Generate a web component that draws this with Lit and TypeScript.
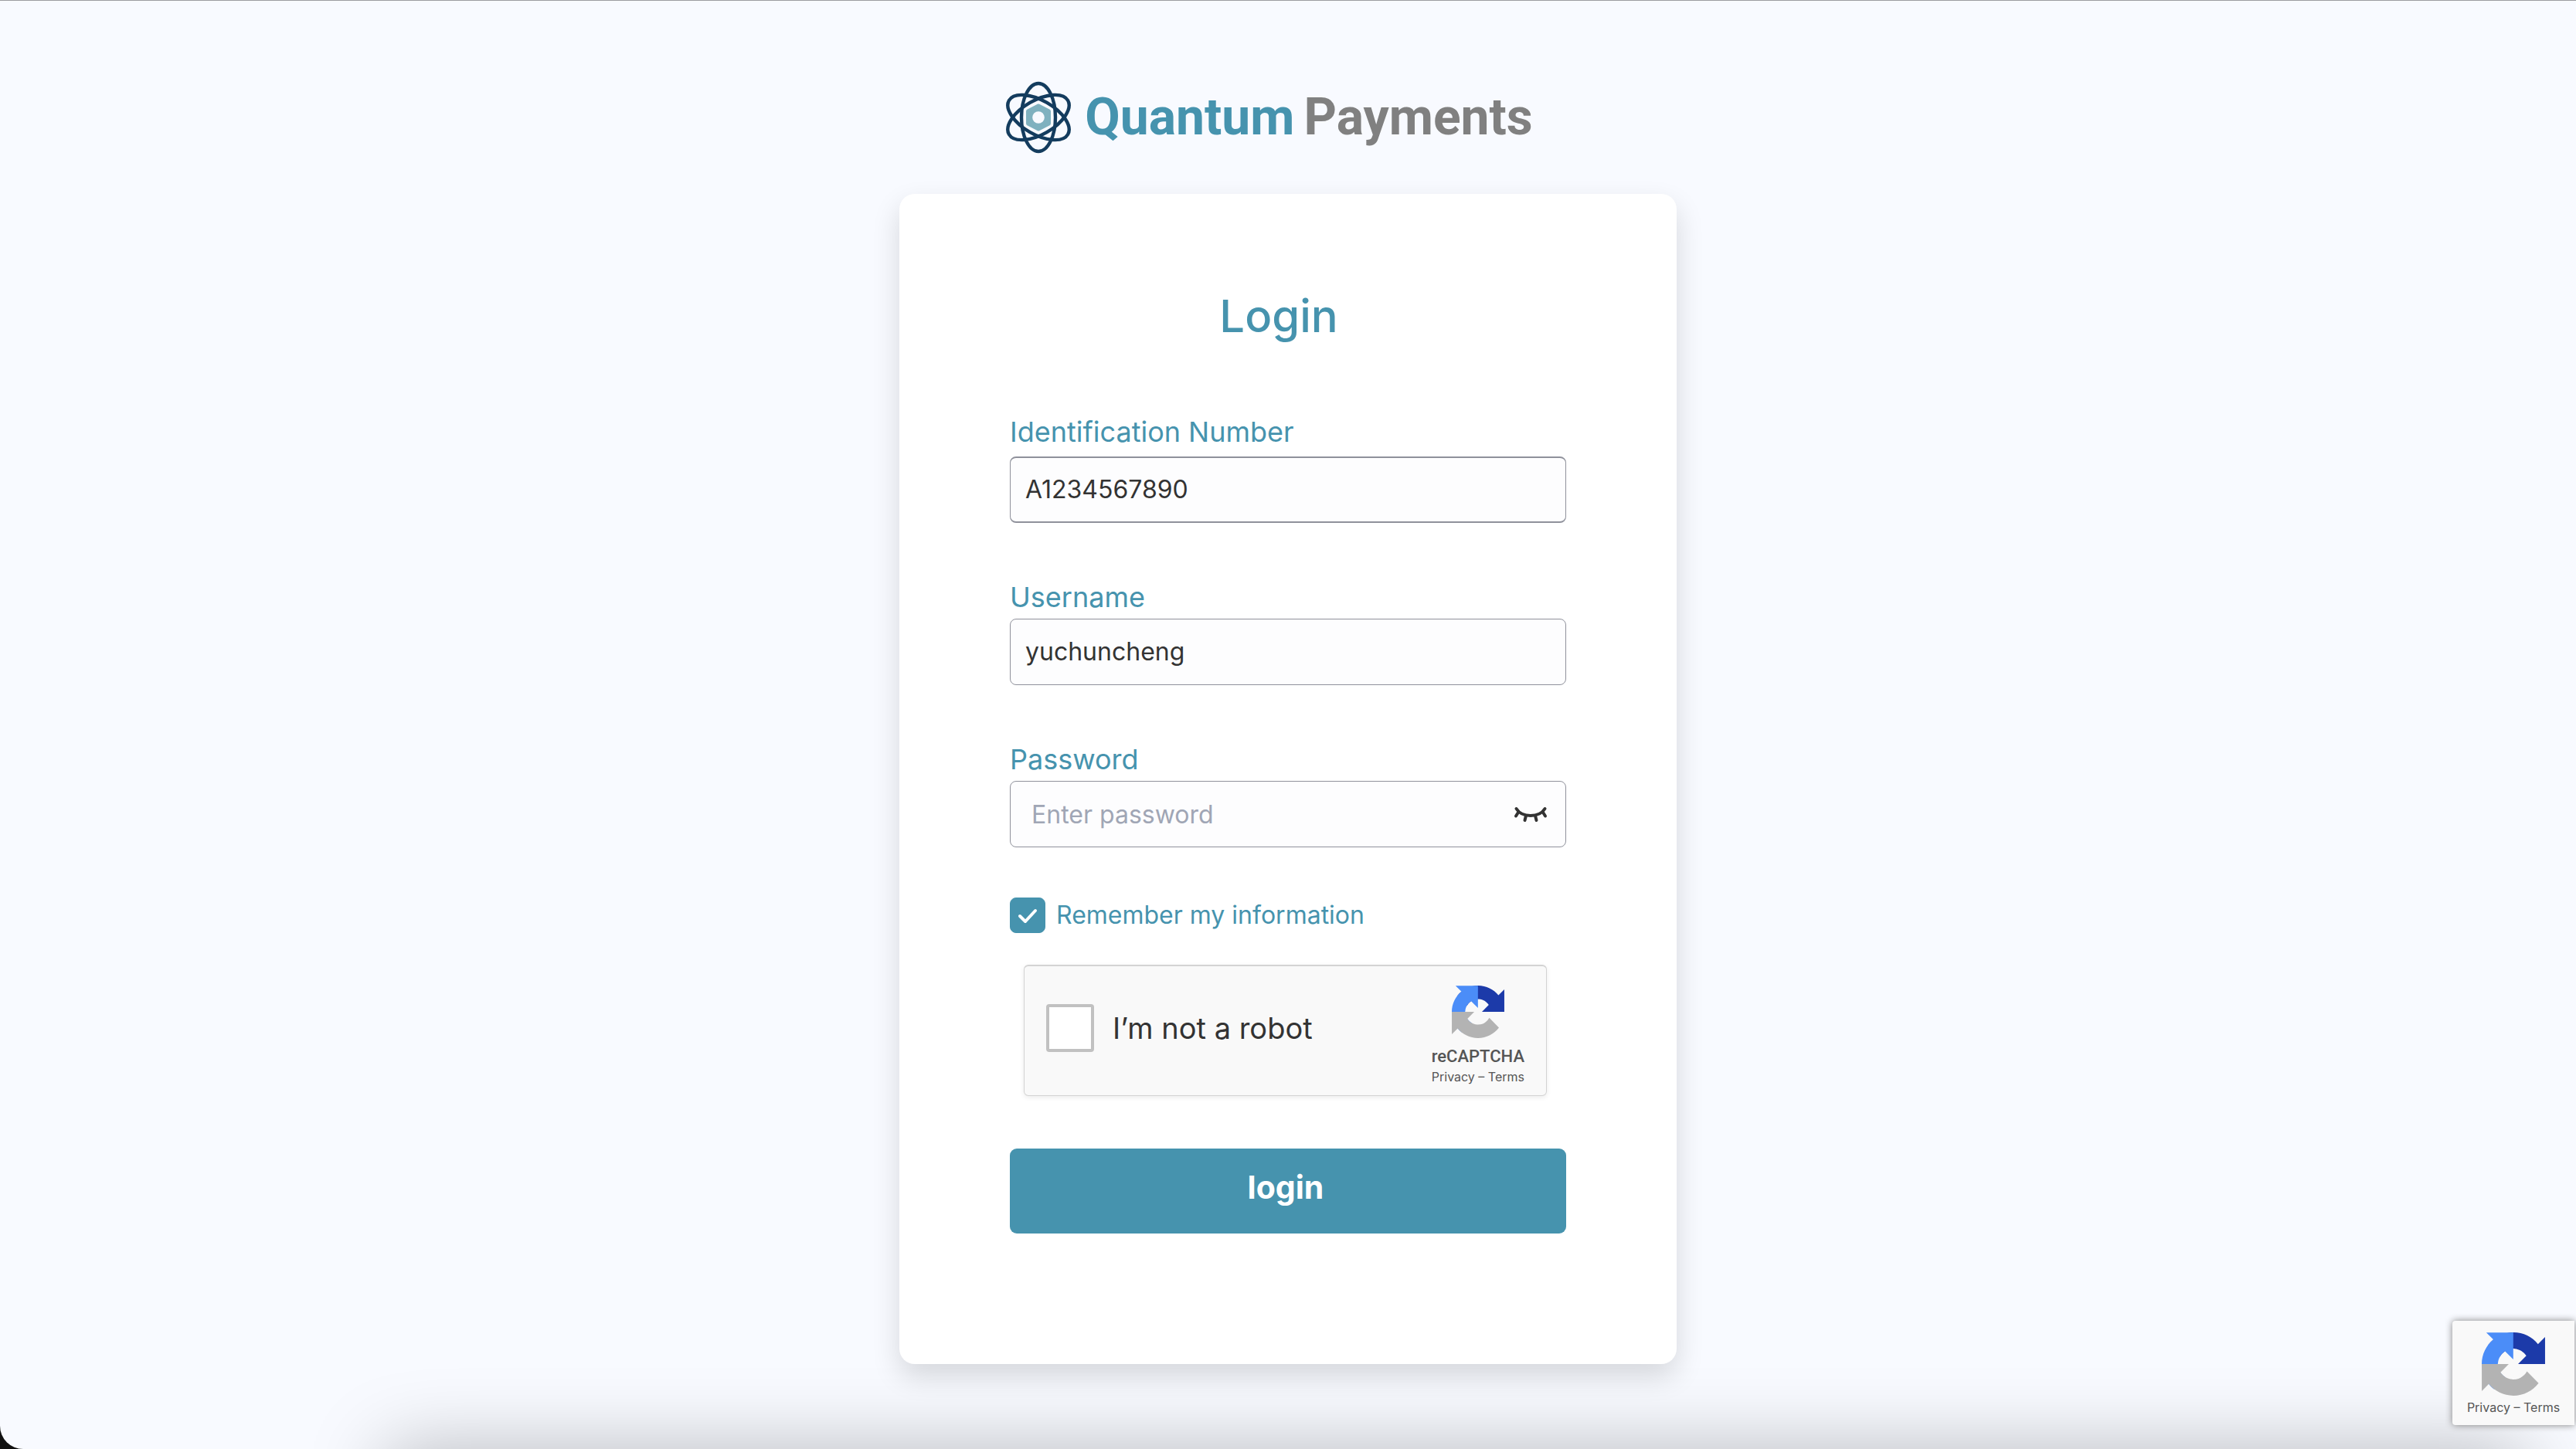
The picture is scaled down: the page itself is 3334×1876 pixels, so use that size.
import { LitElement, html, css, svg } from "lit";
import { customElement, state } from "lit/decorators.js";

const TEAL = css`#4693ae`;

@customElement("recaptcha-mark")
class RecaptchaMark extends LitElement {
  static styles = css`
    :host {
      display: block;
    }
    .mark {
      display: block;
      width: 100%;
    }
  `;

  render() {
    return html`
      <svg class="mark" viewBox="0 0 64 64" aria-hidden="true">
        ${svg`
          <path fill="#1c3aa9" d="M64 31.955l-.033-1.37V4.687l-7.16 7.16C50.948 4.674 42.033.093 32.05.093c-10.4 0-19.622 4.96-25.458 12.64l11.736 11.86a15.55 15.55 0 0 1 4.754-5.334c2.05-1.6 4.952-2.906 8.968-2.906.485 0 .86.057 1.135.163 4.976.393 9.288 3.14 11.828 7.124l-8.307 8.307L64 31.953"/>
          <path fill="#4b8df8" d="M31.862.094l-1.37.033H4.594l7.16 7.16C4.58 13.147 0 22.06 0 32.046c0 10.4 4.96 19.622 12.64 25.458L24.5 45.768a15.55 15.55 0 0 1-5.334-4.754c-1.6-2.05-2.906-4.952-2.906-8.968 0-.485.057-.86.163-1.135.393-4.976 3.14-9.288 7.124-11.828l8.307 8.307L31.86.095"/>
          <path fill="#b3b3b3" d="M.001 32.045l.033 1.37v25.898l7.16-7.16c5.86 7.173 14.774 11.754 24.76 11.754 10.4 0 19.622-4.96 25.458-12.64l-11.736-11.86a15.55 15.55 0 0 1-4.754 5.334c-2.05 1.6-4.952 2.906-8.968 2.906-.485 0-.86-.057-1.135-.163-4.976-.393-9.288-3.14-11.828-7.124l8.307-8.307c-10.522.04-22.4.066-27.295-.005"/>
        `}
      </svg>
    `;
  }
}

@customElement("app-root")
class AppRoot extends LitElement {
  @state() private showPassword = false;

  static styles = css`
    :host {
      display: block;
      background: #111;
      color: #333;
      font-family: Inter, "Liberation Sans", sans-serif;
    }
    * {
      box-sizing: border-box;
    }
    .page {
      position: relative;
      display: flex;
      flex-direction: column;
      align-items: center;
      min-height: 100vh;
      padding: 103px 0 60px;
      overflow: hidden;
      background: #f8faff;
      border-top: 1px solid #9c9ca0;
      border-bottom-left-radius: 30px;
    }
    .dock-shade {
      position: absolute;
      top: 100%;
      left: 15%;
      right: 2%;
      height: 120px;
      box-shadow: 0 0 100px rgba(0, 0, 0, 0.26);
      pointer-events: none;
    }
    .brand {
      display: flex;
      align-items: center;
      gap: 16px;
      height: 96px;
      margin-bottom: 51px;
      padding-right: 50px;
    }
    .brand-icon {
      width: 88px;
      height: 96px;
    }
    .brand-name {
      display: flex;
      gap: 12px;
      font: 700 66px/80px Roboto, sans-serif;
      color: #808080;
    }
    .brand-lead {
      color: ${TEAL};
    }
    .card {
      width: 100%;
      max-width: 1006px;
      padding: 122px 143px 169px;
      background: #fff;
      border-radius: 20px;
      box-shadow: 0 16px 36px rgba(0, 0, 0, 0.14);
    }
    .title {
      margin: 0 0 90px;
      padding-right: 24px;
      font-size: 58px;
      line-height: 72px;
      font-weight: 500;
      text-align: center;
      color: ${TEAL};
    }
    .field {
      display: flex;
      flex-direction: column;
      gap: 4px;
      margin-bottom: 72px;
    }
    .field.strong {
      gap: 8px;
    }
    .label {
      font-size: 36px;
      line-height: 48px;
      color: ${TEAL};
    }
    .box {
      display: flex;
      align-items: center;
      height: 86px;
      padding: 0 19px;
      background: #fdfdfe;
      border: 1px solid #8f919b;
      border-radius: 8px;
    }
    .strong .box {
      border-width: 2px 1px;
    }
    .box.secret {
      padding: 2px 22px 0 27px;
    }
    .input {
      flex: 1;
      min-width: 0;
      padding: 0;
      border: 0;
      outline: 0;
      background: none;
      font: 400 32px/48px Inter, "Liberation Sans", sans-serif;
      color: #333;
    }
    .input::placeholder {
      color: #a0a6b5;
      opacity: 1;
    }
    .reveal {
      padding: 0;
      border: 0;
      background: none;
      cursor: pointer;
    }
    .eye {
      display: block;
      width: 46px;
      height: 24px;
    }
    .remember {
      display: flex;
      align-items: center;
      gap: 14px;
      margin-top: -7px;
      font-size: 32px;
      line-height: 46px;
      color: ${TEAL};
    }
    .tick {
      display: grid;
      width: 46px;
      height: 46px;
    }
    .tick > * {
      grid-area: 1 / 1;
    }
    .tick-input {
      appearance: none;
      width: 46px;
      height: 46px;
      margin: 0;
      border: 1px solid ${TEAL};
      border-radius: 8px;
      background: #fff;
    }
    .tick-input:checked {
      background: ${TEAL};
    }
    .tick-mark {
      width: 46px;
      height: 46px;
      pointer-events: none;
    }
    .captcha {
      display: flex;
      align-items: center;
      height: 170px;
      margin: 41px 25px 68px 18px;
      padding: 0 28px;
      background: #f9f9f9;
      border: 1px solid #d3d3d3;
      border-top-width: 2px;
      border-radius: 6px;
      box-shadow: 0 2px 6px rgba(0, 0, 0, 0.08);
    }
    .robot {
      flex: 1;
      display: flex;
      align-items: center;
      gap: 24px;
      margin-top: -8px;
      font-size: 38px;
      line-height: 60px;
    }
    .robot-input {
      appearance: none;
      width: 62px;
      height: 62px;
      margin: 0;
      background: #fff;
      border: 4px solid #c1c1c1;
      border-radius: 4px;
    }
    .captcha-side {
      display: flex;
      flex-direction: column;
      align-items: center;
      padding-top: 12px;
    }
    .captcha-mark {
      width: 68px;
      margin-bottom: 10px;
    }
    .captcha-name {
      font: 500 22px/28px Roboto, sans-serif;
      color: #555;
    }
    .legal {
      font-size: 16px;
      line-height: 24px;
      white-space: nowrap;
      color: #555;
    }
    .legal a {
      color: inherit;
      text-decoration: none;
    }
    .submit {
      display: block;
      width: 100%;
      height: 110px;
      padding: 0 6px 10px 0;
      border: 0;
      border-radius: 9px;
      background: ${TEAL};
      color: #fff;
      font: 700 41px/48px Inter, "Liberation Sans", sans-serif;
      cursor: pointer;
    }
    .badge {
      position: absolute;
      right: 2px;
      bottom: 31px;
      display: flex;
      flex-direction: column;
      align-items: center;
      gap: 3px;
      width: 158px;
      height: 135px;
      padding-top: 15px;
      background: #f9f9f9;
      border-radius: 4px 0 0 4px;
      box-shadow: 0 0 10px #808080;
    }
    .badge-mark {
      width: 82px;
    }
  `;

  private togglePassword() {
    this.showPassword = !this.showPassword;
  }

  private legal() {
    return html`<span class="legal"><a href="#privacy">Privacy</a> – <a href="#terms">Terms</a></span>`;
  }

  render() {
    return html`
      <main class="page">
        <div class="dock-shade"></div>

        <header class="brand">
          <svg class="brand-icon" viewBox="-44 -48 88 96" aria-hidden="true">
            <g fill="none" stroke="#143c5e" stroke-width="4.4">
              <ellipse rx="22" ry="44" />
              <ellipse rx="22" ry="44" transform="rotate(60)" />
              <ellipse rx="22" ry="44" transform="rotate(-60)" />
            </g>
            <path
              d="M0-19 17-10V10L0 19-17 10V-10Z"
              fill="#f8faff"
              stroke="#f8faff"
              stroke-width="4"
              stroke-linejoin="round"
            />
            <path
              d="M0-15 13.500-8V8L0 15-13.500 8V-8Z"
              fill="#7fb1bf"
              stroke="#7fb1bf"
              stroke-width="5"
              stroke-linejoin="round"
            />
            <circle r="7.800" fill="#f8faff" />
          </svg>
          <span class="brand-name"><span class="brand-lead">Quantum</span><span>Payments</span></span>
        </header>

        <form class="card" @submit=${(e: Event) => e.preventDefault()}>
          <h1 class="title">Login</h1>

          <div class="field strong">
            <label class="label" for="ident">Identification Number</label>
            <div class="box"><input class="input" id="ident" type="text" value="A1234567890" /></div>
          </div>

          <div class="field">
            <label class="label" for="user">Username</label>
            <div class="box">
              <input class="input" id="user" type="text" value="yuchuncheng" spellcheck="false" />
            </div>
          </div>

          <div class="field">
            <label class="label" for="pass">Password</label>
            <div class="box secret">
              <input
                class="input"
                id="pass"
                type=${this.showPassword ? "text" : "password"}
                placeholder="Enter password"
              />
              <button class="reveal" type="button" aria-label="Show password" @click=${this.togglePassword}>
                <svg class="eye" viewBox="0 0 46 24" fill="none" stroke="#333" stroke-width="4" stroke-linecap="round">
                  <path d="M4.500 4Q10 13 23 13T41.500 4" />
                  <path d="M7.500 8 4 13.500M38.500 8 42 13.500" />
                  <path d="M17 13 15.500 19M29 13 30.500 19" />
                </svg>
              </button>
            </div>
          </div>

          <label class="remember">
            <span class="tick">
              <input class="tick-input" type="checkbox" checked />
              <svg
                class="tick-mark"
                viewBox="0 0 46 46"
                fill="none"
                stroke="#fff"
                stroke-width="4"
                stroke-linecap="round"
                stroke-linejoin="round"
              >
                <path d="M13 24 20 31 33 17" />
              </svg>
            </span>
            <span>Remember my information</span>
          </label>

          <div class="captcha">
            <label class="robot">
              <input class="robot-input" type="checkbox" />
              <span>I’m not a robot</span>
            </label>
            <div class="captcha-side">
              <recaptcha-mark class="captcha-mark"></recaptcha-mark>
              <span class="captcha-name">reCAPTCHA</span>
              ${this.legal()}
            </div>
          </div>

          <button class="submit" type="submit">login</button>
        </form>

        <aside class="badge">
          <recaptcha-mark class="badge-mark"></recaptcha-mark>
          ${this.legal()}
        </aside>
      </main>
    `;
  }
}
